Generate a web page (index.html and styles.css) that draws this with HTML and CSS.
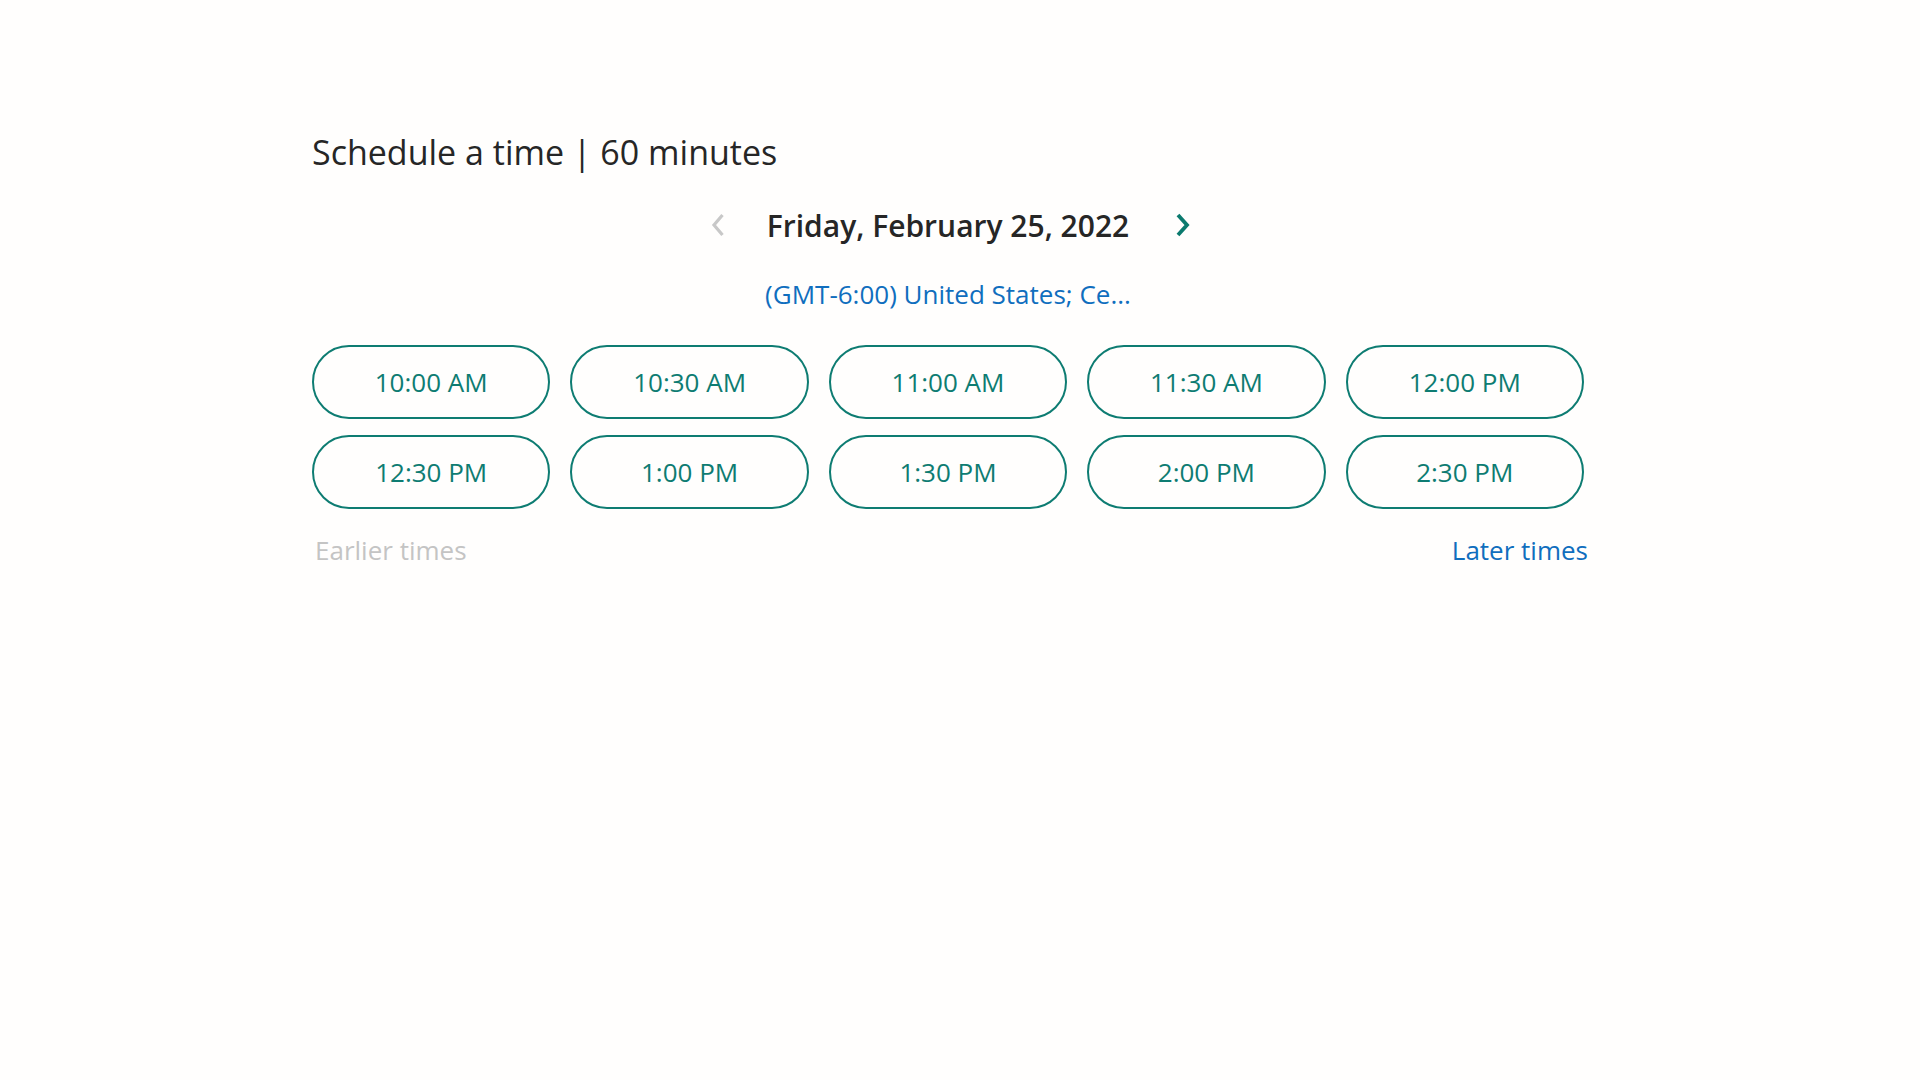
FILE: index.html
```html
<!DOCTYPE html>
<html>
<head>
<meta charset="utf-8">
<link rel="stylesheet" href="styles.css">
</head>
<body>
<main class="scheduler">
  <h1 class="title">Schedule a time | 60 minutes</h1>
  <div class="date-nav">
    <button class="nav-btn prev" aria-label="Previous day">
      <svg width="18" height="26" viewBox="0 0 18 26"><path d="M13.5 3 L5 13 L13.5 23" fill="none" stroke="currentColor" stroke-width="3.2"/></svg>
    </button>
    <div class="date">Friday, February 25, 2022</div>
    <button class="nav-btn next" aria-label="Next day">
      <svg width="18" height="26" viewBox="0 0 18 26"><path d="M4 3 L13 13 L4 23" fill="none" stroke="currentColor" stroke-width="3.8"/></svg>
    </button>
  </div>
  <div class="tz"><a href="#">(GMT-6:00) United States; Ce...</a></div>
  <div class="slots">
    <button class="slot">10:00 AM</button>
    <button class="slot">10:30 AM</button>
    <button class="slot">11:00 AM</button>
    <button class="slot">11:30 AM</button>
    <button class="slot">12:00 PM</button>
    <button class="slot">12:30 PM</button>
    <button class="slot">1:00 PM</button>
    <button class="slot">1:30 PM</button>
    <button class="slot">2:00 PM</button>
    <button class="slot">2:30 PM</button>
  </div>
  <div class="more">
    <span class="earlier">Earlier times</span>
    <a class="later" href="#">Later times</a>
  </div>
</main>
</body>
</html>
```
FILE: styles.css
```css
html, body {
  margin: 0;
  padding: 0;
  background: #fffefd;
  font-family: "Open Sans", "Noto Sans", sans-serif;
}
.scheduler {
  width: 1272px;
  margin-left: 312px;
  padding-top: 130px;
}
.title {
  margin: 0;
  font-size: 34px;
  font-weight: 400;
  color: #262626;
  line-height: 44px;
}
.date-nav {
  display: flex;
  justify-content: center;
  align-items: center;
  margin-top: 30px;
  height: 42px;
  padding-left: 5px;
}
.nav-btn {
  border: 0;
  background: none;
  padding: 0;
  display: flex;
  align-items: center;
}
.nav-btn.prev { color: #c8c8c8; margin-right: 40px; }
.nav-btn.next { color: #0b7a6e; margin-left: 45px; }
.date {
  font-size: 30px;
  font-weight: 600;
  color: #262626;
}
.tz {
  text-align: center;
  margin-top: 32px;
  font-size: 26px;
  line-height: 32px;
}
.tz a {
  color: #106ebe;
  text-decoration: none;
}
.slots {
  display: grid;
  grid-template-columns: repeat(5, 1fr);
  column-gap: 20px;
  row-gap: 16px;
  margin-top: 35px;
}
.slot {
  height: 74px;
  border: 2px solid #0e7c72;
  border-radius: 37px;
  background: transparent;
  color: #0e7c72;
  font-family: "Open Sans", "Noto Sans", sans-serif;
  font-size: 26px;
  padding: 0;
}
.more {
  display: flex;
  justify-content: space-between;
  margin-top: 23px;
  font-size: 26px;
  line-height: 36px;
  padding: 0 0 0 3px;
  margin-right: -4px;
}
.earlier { color: #c4c4c4; }
.later {
  color: #106ebe;
  text-decoration: none;
}
```
